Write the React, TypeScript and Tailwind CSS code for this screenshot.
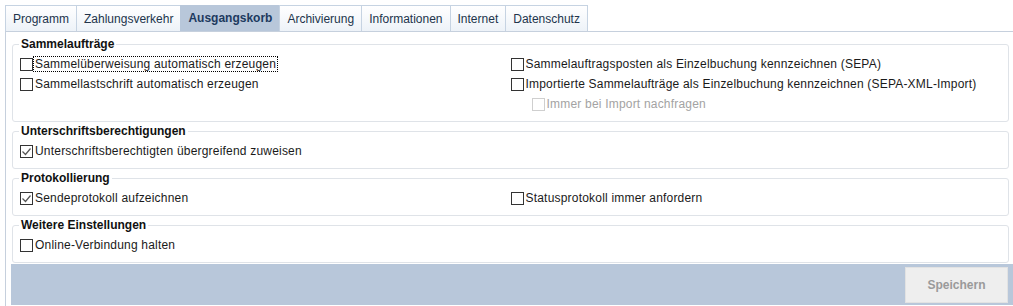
import React from "react";

type Opt = {
  label: string;
  checked?: boolean;
  disabled?: boolean;
  focused?: boolean;
  indent?: boolean;
};

const tabs = [
  "Programm",
  "Zahlungsverkehr",
  "Ausgangskorb",
  "Archivierung",
  "Informationen",
  "Internet",
  "Datenschutz",
];

const Check = ({ checked, disabled }: { checked?: boolean; disabled?: boolean }) => (
  <span
    className={
      "flex h-[13px] w-[13px] shrink-0 items-center justify-center border bg-white " +
      (disabled ? "border-[#cfcfcf]" : "border-[#333333]")
    }
  >
    {checked && (
      <svg width="11" height="11" viewBox="0 0 11 11">
        <polyline points="1.5,5.5 4.5,8.5 9.5,2.5" fill="none" stroke="#555" strokeWidth="1.2" />
      </svg>
    )}
  </span>
);

const Row = ({ opt }: { opt?: Opt }) => {
  if (!opt) return <div className="h-[20px]" />;
  return (
    <div className={"flex h-[20px] items-center " + (opt.indent ? "pl-[21px]" : "")}>
      <Check checked={opt.checked} disabled={opt.disabled} />
      <span
        className={
          "border px-[1px] leading-[14px] tracking-[0.2px] " +
          (opt.focused ? "border-dotted border-black" : "border-transparent") +
          (opt.disabled ? " text-[#a3a3a3]" : " text-[#1a1a1a]")
        }
      >
        {opt.label}
      </span>
    </div>
  );
};

const Group = ({ title, left, right }: { title: string; left: Opt[]; right: Opt[] }) => {
  const n = Math.max(left.length, right.length);
  return (
    <fieldset className="mt-[2px] rounded-[3px] border border-[#dfe3e8] pl-[6px] pr-[7px] pb-[7px] first:mt-0">
      <legend className="px-[2px] text-[12px] font-bold leading-[14px] text-[#111]">{title}</legend>
      <div className="ml-[1px] grid grid-cols-2 pt-[3px]">
        <div>
          {Array.from({ length: n }).map((_, i) => (
            <Row key={i} opt={left[i]} />
          ))}
        </div>
        <div>
          {Array.from({ length: n }).map((_, i) => (
            <Row key={i} opt={right[i]} />
          ))}
        </div>
      </div>
    </fieldset>
  );
};

export default function App() {
  return (
    <div
      className="h-[306px] w-[1013px] overflow-hidden bg-white text-[12px]"
      style={{ fontFamily: '"Liberation Sans", Arial, sans-serif' }}
    >
      <div className="flex pl-[5px] pt-[5px]">
        {tabs.map((t) => {
          const active = t === "Ausgangskorb";
          return (
            <div
              key={t}
              className={
                "-ml-px flex h-[26px] items-center px-[7px] first:ml-0 " +
                (active
                  ? "bg-[#b8c7da] font-bold text-[#1d3a5f] border border-[#b8c7da]"
                  : "border border-b-0 border-[#c6d3e2] bg-gradient-to-b from-white to-[#edf2f8] text-[#22344b]")
              }
            >
              {t}
            </div>
          );
        })}
      </div>
      <div className="ml-[5px] flex h-[275px] flex-col border-l border-t border-[#c6d0dd]">
        <div className="flex flex-col pl-[6px] pr-[4px] pt-[5px]">
          <Group
            title="Sammelaufträge"
            left={[
              { label: "Sammelüberweisung automatisch erzeugen", focused: true },
              { label: "Sammellastschrift automatisch erzeugen" },
            ]}
            right={[
              { label: "Sammelauftragsposten als Einzelbuchung kennzeichnen (SEPA)" },
              { label: "Importierte Sammelaufträge als Einzelbuchung kennzeichnen (SEPA-XML-Import)" },
              { label: "Immer bei Import nachfragen", disabled: true, indent: true },
            ]}
          />
          <Group
            title="Unterschriftsberechtigungen"
            left={[{ label: "Unterschriftsberechtigten übergreifend zuweisen", checked: true }]}
            right={[]}
          />
          <Group
            title="Protokollierung"
            left={[{ label: "Sendeprotokoll aufzeichnen", checked: true }]}
            right={[{ label: "Statusprotokoll immer anfordern" }]}
          />
          <Group
            title="Weitere Einstellungen"
            left={[{ label: "Online-Verbindung halten" }]}
            right={[]}
          />
        </div>
        <div className="ml-[5px] mt-[1px] flex h-[41px] justify-end bg-[#b8c7da] pr-[5px] pt-[3px]">
          <button className="h-[36px] w-[103px] border border-[#e2e2e2] bg-[#eeeeee] text-[12px] font-bold text-[#9a9a9a]">
            Speichern
          </button>
        </div>
      </div>
    </div>
  );
}
